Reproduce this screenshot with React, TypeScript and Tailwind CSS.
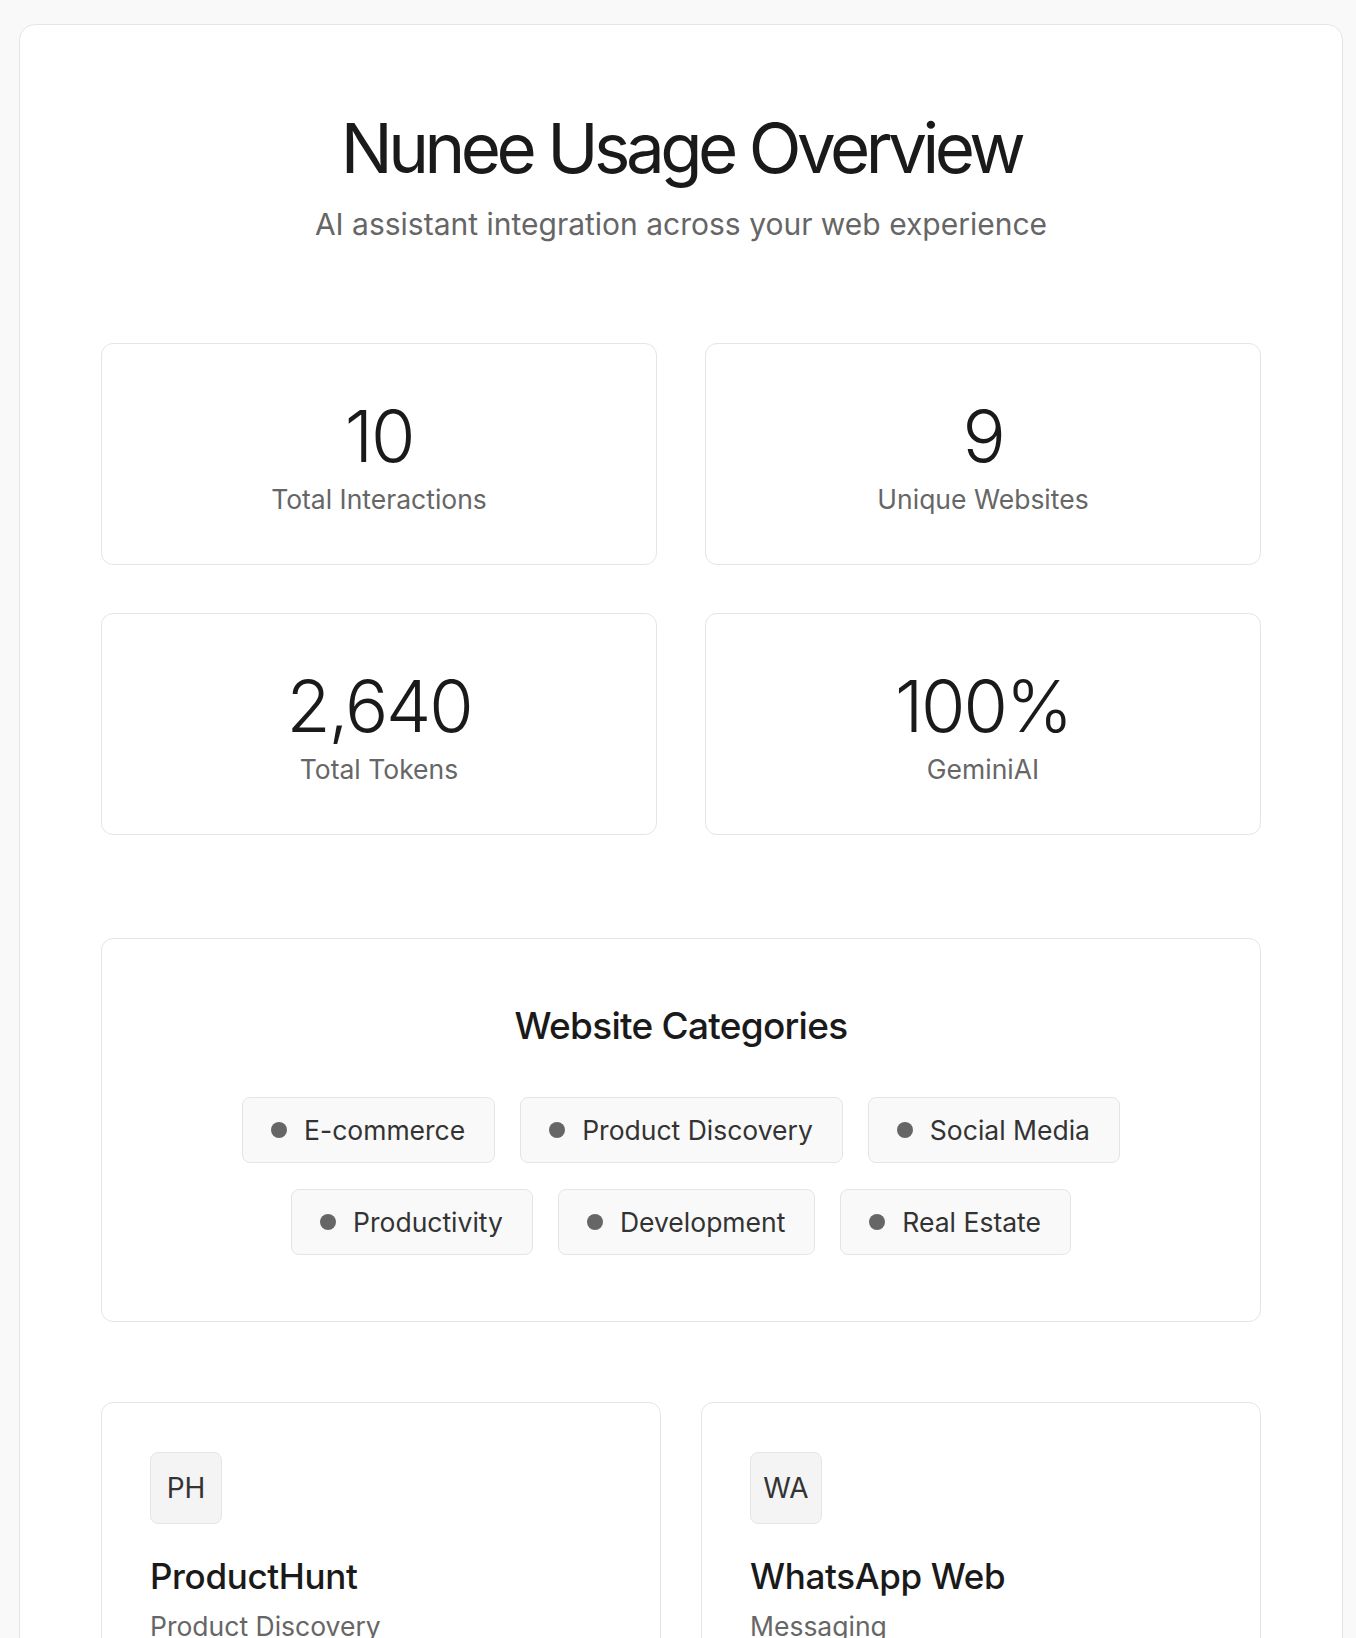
import React from "react";

const stats = [
  { value: "10", label: "Total Interactions" },
  { value: "9", label: "Unique Websites" },
  { value: "2,640", label: "Total Tokens" },
  { value: "100%", label: "GeminiAI" },
];

const row1 = ["E-commerce", "Product Discovery", "Social Media"];
const row2 = ["Productivity", "Development", "Real Estate"];

const sites = [
  { abbr: "PH", name: "ProductHunt", cat: "Product Discovery" },
  { abbr: "WA", name: "WhatsApp Web", cat: "Messaging" },
];

function Chip({ label }: { label: string }) {
  return (
    <div className="flex h-[66px] items-center gap-[17px] rounded-lg border border-[#e5e5e5] bg-[#f9f9f9] pl-[28px] pr-[29px]">
      <span className="h-[16px] w-[16px] rounded-full bg-[#666666]" />
      <span className="text-[26.5px] leading-none text-[#333333]">{label}</span>
    </div>
  );
}

export default function App() {
  return (
    <div
      className="min-h-[1638px] bg-[#f9f9f9] pl-[19px] pr-[13px] pt-6"
      style={{ fontFamily: "Inter, 'Noto Sans', sans-serif" }}
    >
      <div className="rounded-2xl border border-[#e5e5e5] bg-white px-[81px] pt-[89px] pb-20">
        <div className="text-center">
          <h1 className="text-[69px] font-normal leading-none tracking-[-0.065em] text-[#1a1a1a]">
            Nunee Usage Overview
          </h1>
          <p className="mt-[23px] text-[30px] font-normal leading-9 text-[#666666]">
            AI assistant integration across your web experience
          </p>
        </div>

        <div className="mt-[101px] grid grid-cols-2 gap-12">
          {stats.map((s) => (
            <div
              key={s.label}
              className="flex flex-col items-center rounded-xl border border-[#e5e5e5] bg-white pt-[56px] pb-[49px]"
            >
              <div className="text-[72px] font-light leading-none tracking-[-0.03em] text-[#1a1a1a]">
                {s.value}
              </div>
              <div className="mt-[11px] text-[26.5px] leading-8 text-[#666666]">{s.label}</div>
            </div>
          ))}
        </div>

        <div className="mt-[103px] rounded-xl border border-[#e5e5e5] bg-white pt-[65px] pb-[66px]">
          <h2 className="text-center text-[37px] font-medium leading-[44px] tracking-[-0.02em] text-[#1a1a1a]">
            Website Categories
          </h2>
          <div className="mt-[49px] flex flex-col items-center gap-[26px]">
            <div className="flex gap-[25px]">
              {row1.map((c) => (
                <Chip key={c} label={c} />
              ))}
            </div>
            <div className="flex gap-[25px]">
              {row2.map((c) => (
                <Chip key={c} label={c} />
              ))}
            </div>
          </div>
        </div>

        <div className="mt-[80px] grid grid-cols-2 gap-10">
          {sites.map((s) => (
            <div key={s.name} className="rounded-xl border border-[#e5e5e5] bg-white px-12 pt-[49px] pb-12">
              <div className="flex h-[72px] w-[72px] items-center justify-center rounded-lg border border-[#e5e5e5] bg-[#f4f4f4] text-[28px] font-normal text-[#333333]">
                {s.abbr}
              </div>
              <div className="mt-[31px] text-[35px] font-medium leading-[42px] tracking-[-0.01em] text-[#1a1a1a]">
                {s.name}
              </div>
              <div className="mt-[13px] text-[26.5px] leading-8 text-[#666666]">{s.cat}</div>
              <div className="h-[200px]" />
            </div>
          ))}
        </div>
      </div>
    </div>
  );
}
